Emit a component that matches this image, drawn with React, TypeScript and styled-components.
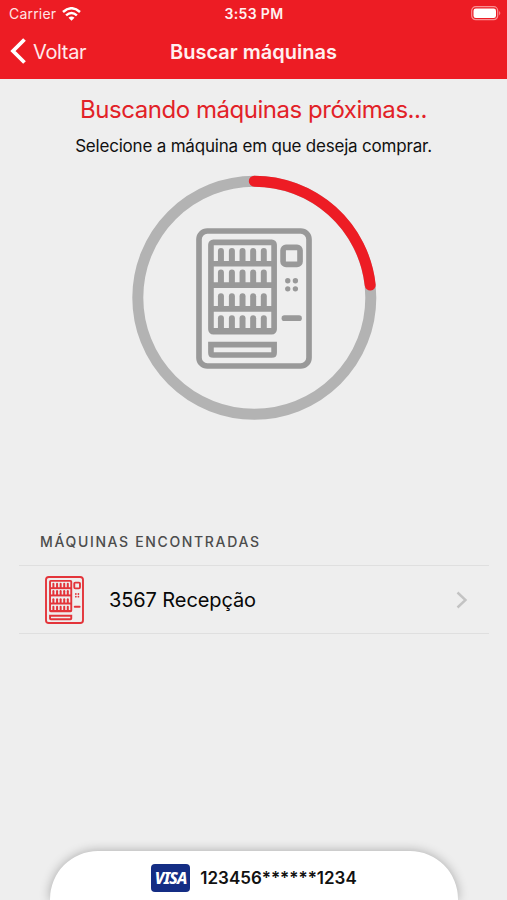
import React from "react";
import styled, { createGlobalStyle } from "styled-components";

const RED = "#ed1c24";

const GlobalStyle = createGlobalStyle`
  *, *::before, *::after { box-sizing: border-box; }
  html, body { margin: 0; background: #eeeeee; }
  body { font-family: Inter, "Liberation Sans", sans-serif; color: #111; }
`;

const Screen = styled.div`
  width: 507px;
  height: 900px;
  display: flex;
  flex-direction: column;
  overflow: hidden;
  background: #eeeeee;
`;

const Header = styled.header`
  flex: none;
  height: 79px;
  background: ${RED};
  color: #fff;
`;

const StatusBar = styled.div`
  height: 28px;
  padding: 0 5px 0 9px;
  display: grid;
  grid-template-columns: 1fr auto 1fr;
  align-items: center;
  font-size: 14px;
  line-height: 28px;
`;

const Carrier = styled.div`
  display: flex;
  align-items: center;
  gap: 6px;
  color: #ffe4e5;
  letter-spacing: 0.2px;
`;

const Clock = styled.div`
  font-weight: 600;
  font-size: 14px;
  letter-spacing: 0.35px;
  padding-right: 3px;
  color: #fff0f0;
`;

const Power = styled.div`
  display: flex;
  justify-content: flex-end;
  padding-bottom: 1px;
`;

const NavBar = styled.nav`
  height: 48px;
  padding: 0 10px;
  display: grid;
  grid-template-columns: 1fr auto 1fr;
  align-items: center;
`;

const BackButton = styled.button`
  border: 0;
  padding: 0;
  background: none;
  display: flex;
  align-items: center;
  gap: 7px;
  color: #ffe9ea;
  font: 400 20px/28px Inter, sans-serif;
  letter-spacing: -0.35px;
`;

const NavTitle = styled.h1`
  margin: 0;
  font-size: 20px;
  line-height: 28px;
  font-weight: 600;
  letter-spacing: 0;
  color: #fff0f0;
`;

const Main = styled.main`
  flex: 1;
  display: flex;
  flex-direction: column;
`;

const Intro = styled.section`
  display: flex;
  flex-direction: column;
  align-items: center;
  padding-top: 15px;
`;

const Heading = styled.h2`
  margin: 0;
  color: #e22127;
  font-size: 24px;
  line-height: 32px;
  font-weight: 400;
  letter-spacing: -0.46px;
`;

const Hint = styled.p`
  margin: 8px 0 0;
  font-size: 17px;
  line-height: 24px;
  letter-spacing: -0.2px;
`;

const Scanner = styled.div`
  display: grid;
  place-items: center;
  width: 246px;
  height: 246px;
  margin-top: 17px;
  & > * { grid-area: 1 / 1; }
`;

const Found = styled.section`
  margin: 111px 18px 0 19px;
`;

const FoundTitle = styled.h3`
  margin: 0;
  height: 33px;
  padding-left: 21px;
  font-size: 14px;
  line-height: 20px;
  font-weight: 500;
  letter-spacing: 1.65px;
  color: #4c4c4c;
`;

const MachineRow = styled.div`
  height: 69px;
  border-top: 1px solid #dfdfdf;
  border-bottom: 1px solid #dfdfdf;
  display: flex;
  align-items: center;
  padding: 0 21px 0 26px;
`;

const MachineName = styled.span`
  flex: 1;
  margin-left: 25px;
  font-size: 20px;
  line-height: 28px;
  letter-spacing: -0.1px;
  color: #080808;
`;

const CardSheet = styled.footer`
  flex: none;
  width: 408px;
  height: 49px;
  margin-left: 50px;
  padding: 5px 0 0 0;
  border-radius: 48px 48px 0 0;
  background: #fff;
  box-shadow: 0 0 11px rgba(0, 0, 0, 0.3);
  display: flex;
  align-items: center;
  justify-content: center;
  gap: 10px;
`;

const VisaBadge = styled.span`
  width: 39px;
  height: 28px;
  border-radius: 4px;
  background: #142d84;
  color: #fff;
  display: grid;
  place-items: center;
  font: italic 800 16px/28px "Noto Sans", sans-serif;
  letter-spacing: -0.8px;
`;

const CardNumber = styled.span`
  font-size: 17px;
  line-height: 24px;
  font-weight: 600;
`;

const BOTTLE_X = [107, 140, 172, 204, 236];
const SHELVES = [
  { top: 98, bottom: 145 },
  { top: 162, bottom: 209 },
  { top: 233, bottom: 280 },
  { top: 299, bottom: 346 },
];

function VendingMachine({ width, height, color }: { width: number; height: number; color: string }) {
  return (
    <svg width={width} height={height} viewBox="32 38 349 422" preserveAspectRatio="none" fill="none" stroke={color} strokeWidth="17">
      <rect x="41" y="47" width="331" height="404" rx="25" />
      <rect x="77" y="81" width="190" height="267" rx="7" />
      {SHELVES.map(({ top, bottom }) => (
        <g key={top}>
          <path d={`M77 ${bottom}H267`} />
          {BOTTLE_X.map((x) => (
            <path key={x} d={`M${x - 9} ${bottom}V${top + 9}a9 9 0 0 1 18 0V${bottom}z`} fill={color} stroke="none" />
          ))}
        </g>
      ))}
      <path d="M77 387H267V411Q267 418 260 418H84Q77 418 77 411Z" />
      <rect x="294" y="96" width="51" height="51" rx="9" />
      <g fill={color} stroke="none">
        <circle cx="308" cy="196" r="8" />
        <circle cx="331" cy="196" r="8" />
        <circle cx="308" cy="220" r="8" />
        <circle cx="331" cy="220" r="8" />
      </g>
      <path d="M298 308H342" strokeLinecap="round" />
    </svg>
  );
}

function ProgressRing() {
  return (
    <svg width="246" height="246" viewBox="0 0 246 246" fill="none" strokeWidth="11">
      <circle cx="123.3" cy="122.7" r="116.5" stroke="#b3b3b3" />
      <path d="M123.3 6.2A116.5 116.5 0 0 1 239.2 110" stroke={RED} strokeLinecap="round" />
    </svg>
  );
}

function WifiIcon() {
  return (
    <svg width="19" height="15" viewBox="0 0 19 15" fill="none" stroke="#fff" strokeWidth="2.5">
      <path d="M1 5Q9.5 -2.5 18 5" />
      <path d="M4.1 8.4Q9.5 3.6 14.9 8.4" />
      <path d="M6.5 10.7Q9.5 8.1 12.5 10.7L9.5 13.7Z" fill="#fff" stroke="none" />
    </svg>
  );
}

function BatteryIcon() {
  return (
    <svg width="31" height="15" viewBox="0 0 31 15">
      <rect x=".7" y=".7" width="26" height="13" rx="4" fill="none" stroke="#f98f93" strokeWidth="1.2" />
      <rect x="2.5" y="2.5" width="22.5" height="9.5" rx="2.3" fill="#fff" />
      <path d="M28.2 5Q30.4 7.2 28.2 9.4Z" fill="#f98f93" />
    </svg>
  );
}

export default function App() {
  return (
    <Screen>
      <GlobalStyle />
      <Header>
        <StatusBar>
          <Carrier>
            Carrier <WifiIcon />
          </Carrier>
          <Clock>3:53 PM</Clock>
          <Power>
            <BatteryIcon />
          </Power>
        </StatusBar>
        <NavBar>
          <BackButton>
            <svg width="16" height="28" viewBox="0 0 16 28" fill="none" stroke="#fff" strokeWidth="3.8">
              <path d="M14.5 1.5L3 13L14.5 24.5" />
            </svg>
            Voltar
          </BackButton>
          <NavTitle>Buscar máquinas</NavTitle>
        </NavBar>
      </Header>
      <Main>
        <Intro>
          <Heading>Buscando máquinas próximas...</Heading>
          <Hint>Selecione a máquina em que deseja comprar.</Hint>
          <Scanner>
            <ProgressRing />
            <VendingMachine width={116} height={141} color="#999" />
          </Scanner>
        </Intro>
        <Found>
          <FoundTitle>MÁQUINAS ENCONTRADAS</FoundTitle>
          <MachineRow>
            <VendingMachine width={39} height={48} color="#e3343a" />
            <MachineName>3567 Recepção</MachineName>
            <svg width="12" height="18" viewBox="0 0 12 18" fill="none" stroke="#c3c3c3" strokeWidth="2.4">
              <path d="M1.5 1.5L9.5 9L1.5 16.5" />
            </svg>
          </MachineRow>
        </Found>
      </Main>
      <CardSheet>
        <VisaBadge>VISA</VisaBadge>
        <CardNumber>123456******1234</CardNumber>
      </CardSheet>
    </Screen>
  );
}
